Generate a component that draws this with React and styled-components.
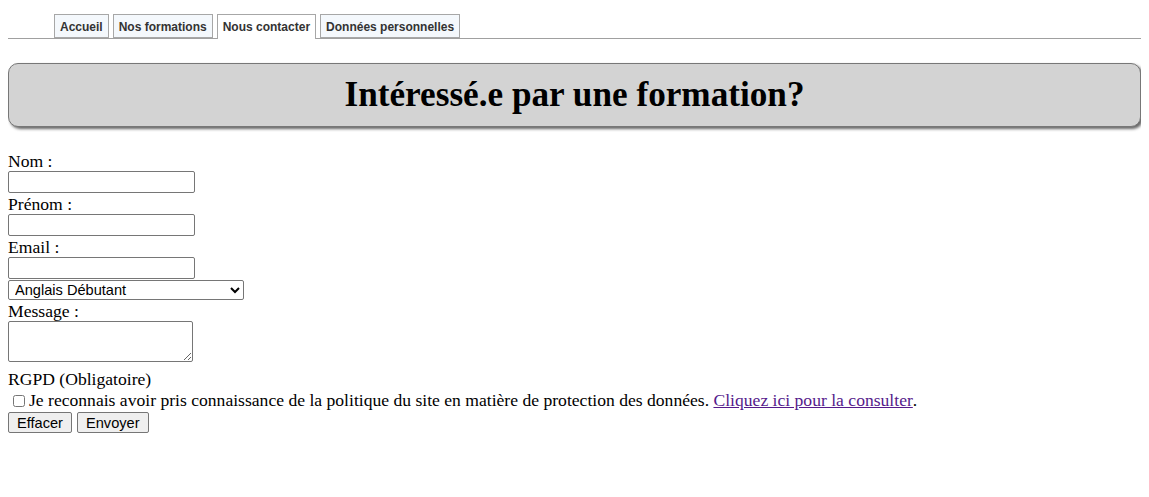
import React from 'react'
import styled, { createGlobalStyle } from 'styled-components'

const GlobalStyle = createGlobalStyle`
    body {
        margin: 8px;
        font-family: "Liberation Serif", "Times New Roman", serif;
        font-size: 17.6px;
        color: #000;
        background: #fff;
    }
`;

const Nav = styled.ul`
    display: flex;
    gap: 4px;
    list-style: none;
    margin: 6px 0 0 0;
    padding: 0 0 0 46px;
    border-bottom: 1px solid #a0a0a0;
    height: 24px;
`;
const Tab = styled.li`
    box-sizing: border-box;
    height: ${p => (p.$active ? '25px' : '24px')};
    padding: 0 5px;
    border: 1px solid #a7a7a7;
    border-bottom: ${p => (p.$active ? 'none' : '1px solid #a7a7a7')};
    background: ${p => (p.$active ? '#fff' : '#f4f8fc')};
    font-family: "Liberation Sans", Arial, sans-serif;
    font-size: 12px;
    font-weight: bold;
    color: #333;
    line-height: 25px;
`;

const Banner = styled.div`
    margin: 24px 0 0 0;
    height: 62px;
    display: flex;
    align-items: center;
    justify-content: center;
    background: #d3d3d3;
    border: 1px solid #777;
    border-radius: 10px;
    box-shadow: 2px 2px 3px #666;
`;
const Title = styled.h1`
    margin: 0;
    font-size: 35.2px;
    font-weight: bold;
`;

const Form = styled.form`
    margin-top: 24px;
    display: flex;
    flex-direction: column;
    align-items: flex-start;
`;
const Label = styled.label`
    display: block;
    line-height: 20px;
    height: 20px;
`;
const TextInput = styled.input`
    box-sizing: border-box;
    width: 187px;
    height: 22px;
    margin: 0 0 1px 0;
    padding: 1px 2px;
    border: 1px solid #767676;
    border-radius: 2px;
    font-size: 14px;
`;
const Select = styled.select`
    box-sizing: border-box;
    width: 236px;
    height: 20px;
    margin: 0 0 1px 0;
    padding: 0 0 0 2px;
    border: 1px solid #767676;
    border-radius: 2px;
    background: #fff;
    font-family: "Liberation Sans", Arial, sans-serif;
    font-size: 14.6px;
    color: #000;
`;
const TextArea = styled.textarea`
    box-sizing: border-box;
    width: 185px;
    height: 41px;
    margin: 0 0 7px 0;
    padding: 2px;
    border: 1px solid #767676;
    border-radius: 2px;
    resize: both;
`;
const Consent = styled.div`
    display: flex;
    align-items: center;
    height: 19px;
    margin-top: 2px;
    margin-bottom: 2px;
    white-space: nowrap;
    a {
        color: #551a8b;
    }
`;
const Check = styled.input`
    width: 12px;
    height: 12px;
    margin: 0 4px 0 5px;
`;
const Buttons = styled.div`
    display: flex;
    gap: 5px;
`;
const Button = styled.button`
    box-sizing: border-box;
    height: 21px;
    padding: 0 8px;
    border: 1px solid #767676;
    border-radius: 2px;
    background: #efefef;
    font-family: "Liberation Sans", Arial, sans-serif;
    font-size: 14.6px;
    color: #000;
`;

const tabs = ['Accueil', 'Nos formations', 'Nous contacter', 'Données personnelles'];

export default function App() {
    return (
        <>
            <GlobalStyle />
            <Nav>
                {tabs.map((t, key) => (
                    <Tab key={key} $active={t === 'Nous contacter'}>{t}</Tab>
                ))}
            </Nav>
            <Banner>
                <Title>Intéressé.e par une formation?</Title>
            </Banner>
            <Form onSubmit={e => e.preventDefault()}>
                <Label htmlFor="nom">Nom :</Label>
                <TextInput id="nom" type="text" />
                <Label htmlFor="prenom">Prénom :</Label>
                <TextInput id="prenom" type="text" />
                <Label htmlFor="email">Email :</Label>
                <TextInput id="email" type="email" />
                <Select defaultValue="ang-deb">
                    <option value="ang-deb">Anglais Débutant</option>
                    <option value="ang-int">Anglais Intermédiaire</option>
                </Select>
                <Label htmlFor="msg">Message :</Label>
                <TextArea id="msg" />
                <Label>RGPD (Obligatoire)</Label>
                <Consent>
                    <Check type="checkbox" />
                    Je reconnais avoir pris connaissance de la politique du site en matière de protection des données.&nbsp;<a href="#">Cliquez ici pour la consulter</a>.
                </Consent>
                <Buttons>
                    <Button type="reset">Effacer</Button>
                    <Button type="submit">Envoyer</Button>
                </Buttons>
            </Form>
        </>
    )
}
